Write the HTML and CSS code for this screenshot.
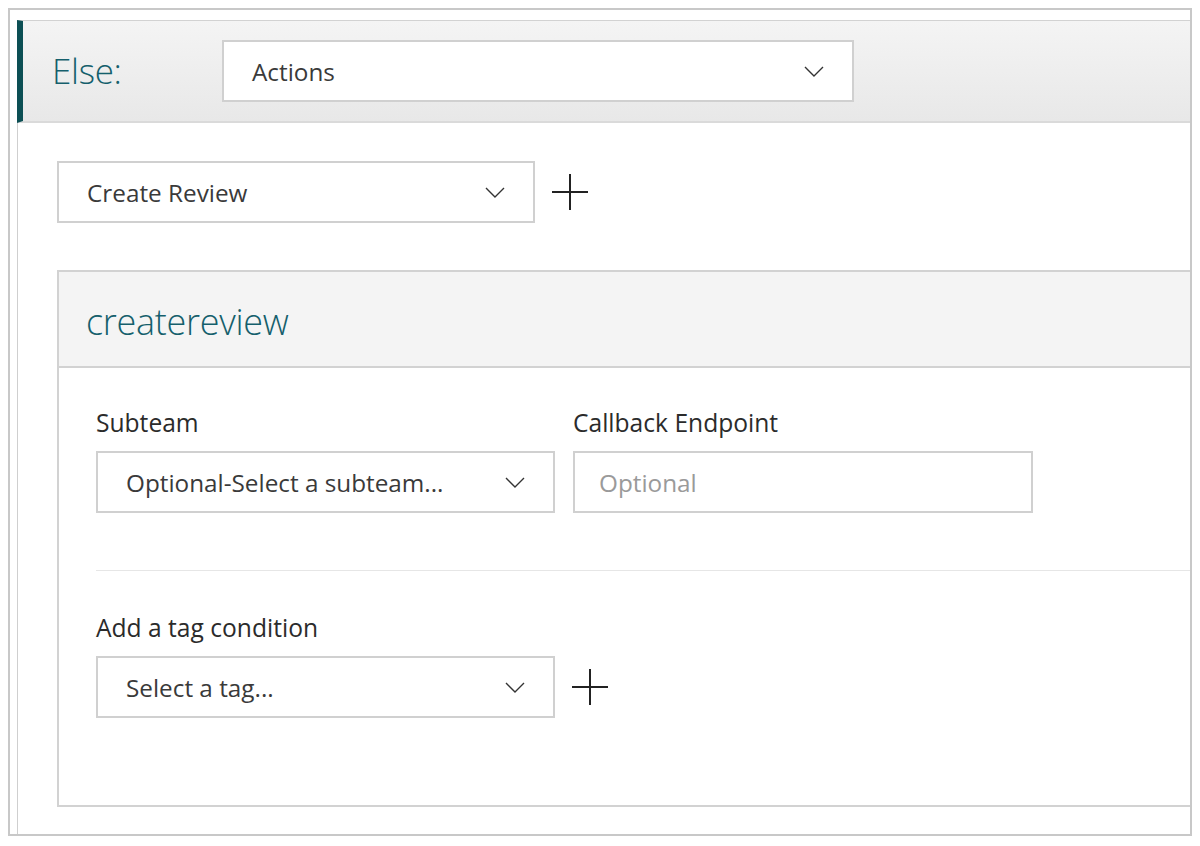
FILE: index.html
```html
<!DOCTYPE html>
<html lang="en">
<head>
<meta charset="utf-8">
<title>Else actions</title>
<link rel="stylesheet" href="styles.css">
</head>
<body>
<div class="frame">
  <div class="card">
    <div class="card-header">
      <span class="else-label">Else:</span>
      <div class="select select-actions">
        <span class="select-text">Actions</span>
        <svg class="chev" viewBox="0 0 20 11" width="20" height="11"><polyline points="1,1 10,10 19,1" fill="none" stroke="#333" stroke-width="1.4"/></svg>
      </div>
    </div>
    <div class="card-body">
      <div class="row">
        <div class="select select-action">
          <span class="select-text">Create Review</span>
          <svg class="chev" viewBox="0 0 20 11" width="20" height="11"><polyline points="1,1 10,10 19,1" fill="none" stroke="#333" stroke-width="1.4"/></svg>
        </div>
        <svg class="plus" viewBox="0 0 36 36" width="36" height="36"><path d="M18 0V36M0 18H36" stroke="#222" stroke-width="2" fill="none"/></svg>
      </div>
      <div class="panel">
        <div class="panel-header">createreview</div>
        <div class="panel-body">
          <div class="fields">
            <div class="field">
              <label class="field-label">Subteam</label>
              <div class="select select-field">
                <span class="select-text">Optional-Select a subteam...</span>
                <svg class="chev" viewBox="0 0 20 11" width="20" height="11"><polyline points="1,1 10,10 19,1" fill="none" stroke="#333" stroke-width="1.4"/></svg>
              </div>
            </div>
            <div class="field">
              <label class="field-label">Callback Endpoint</label>
              <div class="input"><span class="placeholder">Optional</span></div>
            </div>
          </div>
          <div class="divider"></div>
          <div class="field">
            <label class="field-label">Add a tag condition</label>
            <div class="row">
              <div class="select select-field">
                <span class="select-text">Select a tag...</span>
                <svg class="chev" viewBox="0 0 20 11" width="20" height="11"><polyline points="1,1 10,10 19,1" fill="none" stroke="#333" stroke-width="1.4"/></svg>
              </div>
              <svg class="plus" viewBox="0 0 36 36" width="36" height="36"><path d="M18 0V36M0 18H36" stroke="#222" stroke-width="2" fill="none"/></svg>
            </div>
          </div>
        </div>
      </div>
    </div>
  </div>
</div>
</body>
</html>
```

FILE: styles.css
```css
* { box-sizing: border-box; }
html, body { margin: 0; padding: 0; background: #fff; }
body {
  font-family: "Open Sans", "Noto Sans", "Liberation Sans", sans-serif;
  color: #333;
}
.frame {
  margin: 8px 0 0 8px;
  width: 1184px;
  height: 828px;
  border: 2px solid #c8c8c8;
  padding: 10px 0 0 7px;
  overflow: hidden;
}
.card {
  border-left: 1px solid #cfcfcf;
  height: 100%;
  width: 1200px;
}
.card-header {
  margin-left: -1px;
  height: 103px;
  border-top: 1px solid #d2d2d2;
  border-bottom: 2px solid #dadada;
  border-left: 6px solid #0c4f54;
  background: linear-gradient(#f4f4f4, #e8e8e8);
  display: flex;
  align-items: flex-start;
  padding: 19px 0 0 29px;
}
.else-label {
  font-weight: 300;
  font-size: 35px;
  color: #155f6c;
  width: 170px;
  line-height: 62px;
  letter-spacing: -0.3px;
}
.select {
  height: 62px;
  border: 2px solid #d0d0d0;
  background: #fff;
  display: flex;
  align-items: center;
  justify-content: space-between;
  padding: 0 28px 0 28px;
}
.select-text {
  font-size: 24.3px;
  color: #3a3a3a;
}
.chev { display: block; }
.select-actions { width: 632px; }
.card-body {
  padding: 38px 0 0 39px;
}
.row {
  display: flex;
  align-items: center;
  gap: 17px;
}
.select-action { width: 478px; }
.panel {
  margin-top: 47px;
  height: 537px;
  border: 2px solid #d2d2d2;
}
.panel-header {
  height: 96px;
  background: #f4f4f4;
  border-bottom: 2px solid #d2d2d2;
  font-weight: 300;
  font-size: 36px;
  color: #155f6c;
  padding: 25px 0 0 27px;
  letter-spacing: -0.3px;
}
.panel-body {
  padding: 38px 0 0 37px;
}
.fields {
  display: flex;
  gap: 18px;
}
.field { display: flex; flex-direction: column; }
.field-label {
  font-size: 24.6px;
  color: #2b2b2b;
  line-height: 34px;
  margin-bottom: 11px;
}
.select-field { width: 459px; }
.input {
  width: 460px;
  height: 62px;
  border: 2px solid #d0d0d0;
  display: flex;
  align-items: center;
  padding-left: 24px;
}
.placeholder {
  font-size: 24.3px;
  color: #9a9a9a;
}
.divider {
  margin-top: 57px;
  height: 1px;
  background: #e6e6e6;
  margin-bottom: 40px;
}
```
